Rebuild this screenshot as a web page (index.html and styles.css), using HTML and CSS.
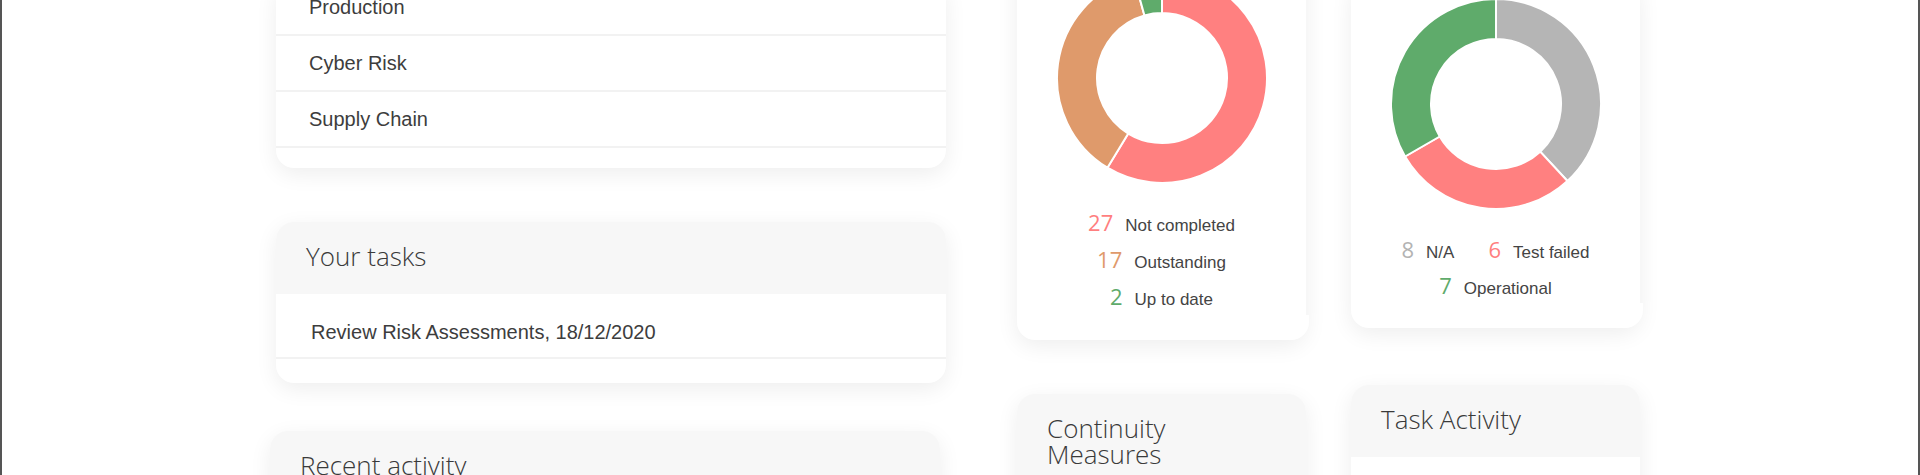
FILE: index.html
```html
<!DOCTYPE html>
<html lang="en">
<head>
    <meta charset="UTF-8">
    <meta name="viewport" content="width=device-width, initial-scale=1.0">
    <title>Dashboard</title>

    <link rel="stylesheet" href="styles.css">
</head>
<body>
    <div class="dashboard">
        <!-- Left column -->
        <div class="column column-main">
            <section class="card">
                <ul class="list">
                    <li>Production</li>
                    <li>Cyber Risk</li>
                    <li>Supply Chain</li>
                </ul>
                <div class="card-foot"></div>
            </section>

            <section class="card card-tasks">
                <header class="card-header">
                    <h2>Your tasks</h2>
                </header>
                <ul class="list list-tasks">
                    <li>Review Risk Assessments, 18/12/2020</li>
                </ul>
                <div class="card-foot foot-tall"></div>
            </section>

            <section class="card card-activity">
                <header class="card-header">
                    <h2>Recent activity</h2>
                </header>
                <div class="card-body"></div>
            </section>
        </div>

        <!-- Middle column -->
        <div class="column column-middle">
            <section class="card chart-card">
                <div class="chart-body">
                    <svg class="donut" width="210" height="210" viewBox="0 0 210 210">
                        <path class="seg-red" d="M105,0 A105,105 0 1 1 50.44,194.71 L71.23,160.53 A65,65 0 1 0 105,40 Z"/>
                        <path class="seg-orange" d="M50.44,194.71 A105,105 0 0 1 76.67,3.89 L87.46,42.41 A65,65 0 0 0 71.23,160.53 Z"/>
                        <path class="seg-green" d="M76.67,3.89 A105,105 0 0 1 105,0 L105,40 A65,65 0 0 0 87.46,42.41 Z"/>
                    </svg>
                    <ul class="legend">
                        <li><span class="legend-num num-red">27</span>Not completed</li>
                        <li><span class="legend-num num-orange">17</span>Outstanding</li>
                        <li><span class="legend-num num-green">2</span>Up to date</li>
                    </ul>
                </div>
                <div class="chart-foot"></div>
            </section>

            <section class="card card-measures">
                <header class="card-header">
                    <h2>Continuity Measures</h2>
                </header>
                <div class="card-body"></div>
            </section>
        </div>

        <!-- Right column -->
        <div class="column column-right">
            <section class="card chart-card">
                <div class="chart-body">
                    <svg class="donut" width="210" height="210" viewBox="0 0 210 210">
                        <path class="seg-grey" d="M105,0 A105,105 0 0 1 176.42,181.97 L149.21,152.65 A65,65 0 0 0 105,40 Z"/>
                        <path class="seg-red" d="M176.42,181.97 A105,105 0 0 1 14.07,157.5 L48.71,137.5 A65,65 0 0 0 149.21,152.65 Z"/>
                        <path class="seg-green" d="M14.07,157.5 A105,105 0 0 1 105,0 L105,40 A65,65 0 0 0 48.71,137.5 Z"/>
                    </svg>
                    <ul class="legend legend-tight">
                        <li><span class="legend-num num-grey">8</span>N/A</li>
                        <li><span class="legend-num num-red">6</span>Test failed</li>
                        <li><span class="legend-num num-green">7</span>Operational</li>
                    </ul>
                </div>
                <div class="chart-foot"></div>
            </section>

            <section class="card card-task-activity">
                <header class="card-header">
                    <h2>Task Activity</h2>
                </header>
                <div class="card-body"></div>
            </section>
        </div>
    </div>
</body>
</html>
```

FILE: styles.css
```css
html {
    overflow: hidden;
}
body {
    font-family: 'Liberation Sans', Arial, sans-serif;
    background-color: white;
    color: #444;
    margin: 0;
    padding: 0;
    height: 100vh;
    box-sizing: border-box;
    border-left: 2px solid #555;
    border-right: 2px solid #555;
    overflow: hidden;
}
.dashboard {
    display: flex;
    align-items: flex-start;
    padding-left: 274px;
}
.column {
    display: flex;
    flex-direction: column;
}
.column-main {
    width: 670px;
    margin-top: -20px;
}
.column-middle {
    width: 289px;
    margin-left: 71px;
    margin-top: -47px;
}
.column-right {
    width: 289px;
    margin-left: 45px;
    margin-top: -21px;
}
/* Cards */
.card {
    background-color: white;
    border-radius: 18px;
    box-shadow: 0 6px 22px rgba(0, 0, 0, 0.07);
}
.card-header {
    background-color: #f7f7f7;
    border-radius: 18px 18px 0 0;
    padding: 21px 30px 25px;
}
.card-header h2 {
    font-family: 'Open Sans', 'Liberation Sans', sans-serif;
    font-weight: 300;
    font-size: 26px;
    line-height: 26px;
    color: #3a3a3a;
    margin: 0;
}
.card-body {
    height: 200px;
}
.card-foot {
    height: 20px;
}
.card-foot.foot-tall {
    height: 24px;
}
.card-tasks {
    margin-top: 54px;
}
.card-activity {
    margin-top: 48px;
    margin-left: -6px;
    margin-right: 6px;
}
.card-measures {
    margin-top: 54px;
}
.card-task-activity {
    margin-top: 57px;
}
/* Lists */
.list {
    list-style: none;
    margin: 0;
    padding: 0;
}
.list li {
    font-size: 20px;
    line-height: 20px;
    color: #3d3d3d;
    padding: 17px 34px 17px 33px;
    border-bottom: 2px solid #f2f2f2;
}
.list-tasks li {
    padding: 28px 34px 15px 35px;
}
/* Charts */
.chart-card {
    border-radius: 18px;
}
.chart-body {
    padding-top: 20px;
    border-radius: 18px 18px 0 0;
}
.chart-foot {
    height: 25px;
    background-color: white;
    border-radius: 0 0 18px 18px;
    margin: 0 -3px 0 3px;
}
.donut {
    display: block;
    margin: 0 auto;
}
.donut path {
    stroke: white;
    stroke-width: 2px;
}
.seg-red {
    fill: #ff8080;
}
.seg-orange {
    fill: #df9a6b;
}
.seg-green {
    fill: #5fab6b;
}
.seg-grey {
    fill: #b5b5b5;
}
.legend {
    list-style: none;
    margin: 21px 0 0;
    padding: 0;
    display: flex;
    flex-wrap: wrap;
    justify-content: center;
}
.legend li {
    display: flex;
    align-items: baseline;
    height: 37px;
    line-height: 37px;
    margin: 0 17px;
    font-size: 17px;
    color: #444;
}
.legend-tight {
    margin-top: 22px;
}
.legend-tight li {
    height: 36px;
    line-height: 36px;
}
.legend-num {
    font-family: 'Open Sans', 'Liberation Sans', sans-serif;
    font-weight: 400;
    font-size: 22px;
    margin-right: 12px;
}
.num-red {
    color: #ff7f7f;
}
.num-orange {
    color: #df9a6b;
}
.num-green {
    color: #5fab6b;
}
.num-grey {
    color: #b3b3b3;
}
```
